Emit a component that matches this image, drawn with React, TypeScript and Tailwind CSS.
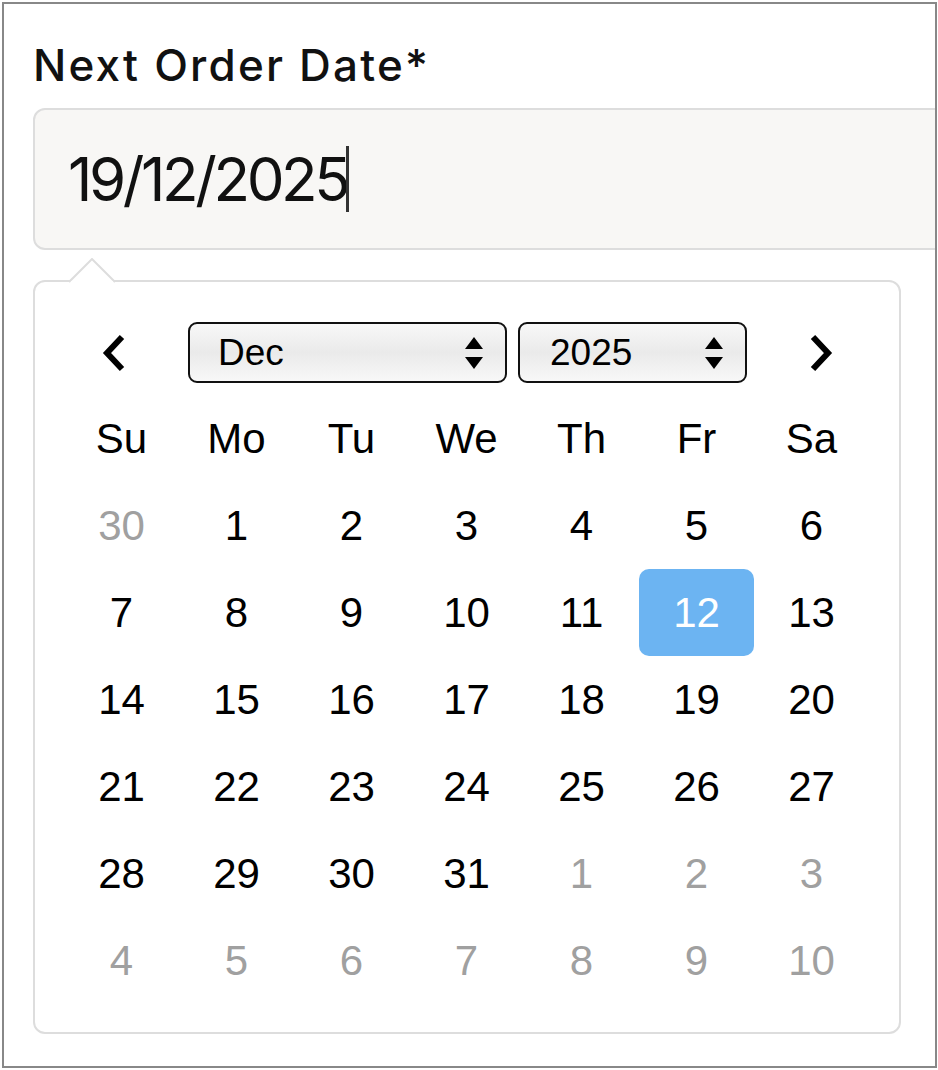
import React from 'react'

const weekDays = ['Su', 'Mo', 'Tu', 'We', 'Th', 'Fr', 'Sa']

interface Day {
  label: number
  muted?: boolean
  selected?: boolean
}

function buildWeeks(): Day[][] {
  const days: Day[] = [{ label: 30, muted: true }]
  for (let d = 1; d <= 31; d++) days.push({ label: d, selected: d === 12 })
  for (let d = 1; d <= 10; d++) days.push({ label: d, muted: true })
  const weeks: Day[][] = []
  for (let i = 0; i < days.length; i += 7) weeks.push(days.slice(i, i + 7))
  return weeks
}

function Chevron(props: { dir: 'left' | 'right' }) {
  const d = props.dir === 'left' ? 'M27 4 L12 20 L27 36' : 'M13 4 L28 20 L13 36'
  return (
    <svg width="40" height="40" viewBox="0 0 40 40" className="shrink-0">
      <path d={d} fill="none" stroke="#000" strokeWidth="6" strokeLinejoin="miter" />
    </svg>
  )
}

function SelectArrows() {
  return (
    <svg width="20" height="36" viewBox="0 0 20 36" className="shrink-0">
      <path d="M10 2 L19 14 L1 14 Z" fill="#000" />
      <path d="M1 22 L19 22 L10 34 Z" fill="#000" />
    </svg>
  )
}

export default function App() {
  const weeks = buildWeeks()
  return (
    <div className="h-[1070px] w-[938px] bg-white pt-[2px] pl-[2px]">
      <div className="h-[1066px] w-[935px] overflow-hidden border-2 border-[#888888] pl-[29px] font-['Liberation_Sans',Arial,sans-serif]">
        <div className="mt-[39px] font-['Inter',sans-serif] text-[44px] font-medium leading-none tracking-[2.2px] whitespace-nowrap text-[#111]">
          Next Order Date*
        </div>
        <div className="mt-[21px] flex h-[142px] w-[1000px] items-center rounded-[12px] border-2 border-[#dddddd] bg-[#f8f7f5] pl-[33px]">
          <span className="font-['Inter',sans-serif] text-[60px] leading-none tracking-[-3.4px] text-[#111]">
            19/12/2025
          </span>
          <span className="-ml-[1px] inline-block h-[66px] w-[3px] bg-[#333]" />
        </div>

        <div className="relative mt-[30px] h-[754px] w-[868px] rounded-[12px] border-2 border-[#dddddd] bg-white pt-[40px] pl-[29px]">
          <svg
            width="46"
            height="26"
            viewBox="0 0 46 26"
            className="absolute top-[-24px] left-[34px]"
          >
            <path d="M0 24 L23 1 L46 24" fill="#fff" stroke="#dddddd" strokeWidth="2" />
            <rect x="2" y="23" width="42" height="4" fill="#fff" />
          </svg>

          <div className="flex h-[61px] items-center">
            <div className="ml-[31px]">
              <Chevron dir="left" />
            </div>
            <div className="ml-[53px] flex">
              <div className="flex h-[61px] w-[319px] items-center justify-between rounded-[9px] border-2 border-[#111] bg-linear-to-b from-[#f8f8f8] via-[#eaeaea] to-[#f8f8f8] pr-[21px] pl-[28px]">
                <span className="text-[37px] leading-none text-black">Dec</span>
                <SelectArrows />
              </div>
              <div className="ml-[11px] flex h-[61px] w-[229px] items-center justify-between rounded-[9px] border-2 border-[#111] bg-linear-to-b from-[#f8f8f8] via-[#eaeaea] to-[#f8f8f8] pr-[21px] pl-[30px]">
                <span className="text-[37px] leading-none text-black">2025</span>
                <SelectArrows />
              </div>
            </div>
            <div className="ml-[53px]">
              <Chevron dir="right" />
            </div>
          </div>

          <div className="mt-[12px] grid w-[805px] grid-cols-7">
            {weekDays.map((w) => (
              <div key={w} className="flex h-[87px] items-center justify-center text-[42px] leading-none text-black">
                {w}
              </div>
            ))}
            {weeks.map((week, wi) =>
              week.map((day, di) => (
                <div
                  key={`${wi}-${di}`}
                  className={`flex h-[87px] items-center justify-center rounded-[10px] text-[42px] leading-none ${
                    day.selected
                      ? 'bg-[#6cb4f2] text-white'
                      : day.muted
                        ? 'text-[#a0a0a0]'
                        : 'text-black'
                  }`}
                >
                  {day.label}
                </div>
              ))
            )}
          </div>
        </div>
      </div>
    </div>
  )
}
